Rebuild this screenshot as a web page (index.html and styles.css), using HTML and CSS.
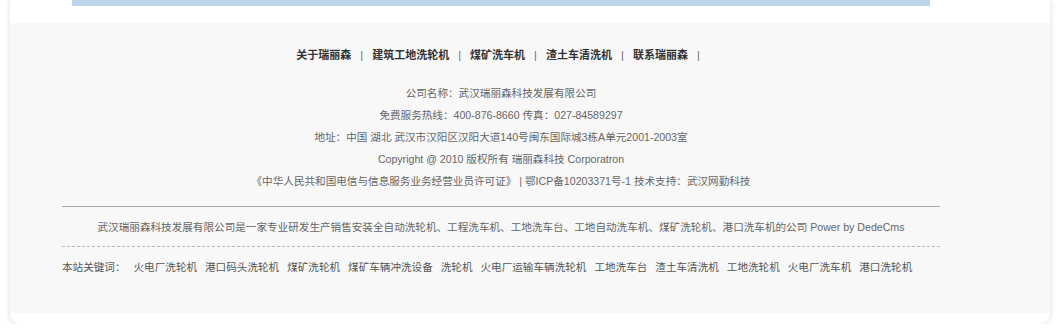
FILE: index.html
```html
<!DOCTYPE html>
<html lang="zh-CN">
<head>
  <meta charset="UTF-8">
  <title>武汉瑞丽森科技发展有限公司</title>
  <link rel="stylesheet" href="styles.css">
</head>
<body>
  <div class="page">
    <div class="top-strip">
      <div class="blue-bar"></div>
    </div>

    <!-- Footer -->
    <div class="footer">
      <div class="footer-inner">
        <div class="footer-nav">
          <a href="#">关于瑞丽森</a><span class="sep">|</span>
          <a href="#">建筑工地洗轮机</a><span class="sep">|</span>
          <a href="#">煤矿洗车机</a><span class="sep">|</span>
          <a href="#">渣土车清洗机</a><span class="sep">|</span>
          <a href="#">联系瑞丽森</a><span class="sep">|</span>
        </div>

        <div class="company-info">
          <p>公司名称：武汉瑞丽森科技发展有限公司</p>
          <p>免费服务热线：400-876-8660 传真：027-84589297</p>
          <p>地址：中国 湖北 武汉市汉阳区汉阳大道140号闽东国际城3栋A单元2001-2003室</p>
          <p>Copyright @ 2010 版权所有 瑞丽森科技 Corporatron</p>
          <p>《中华人民共和国电信与信息服务业务经营业员许可证》 | 鄂ICP备10203371号-1 技术支持：武汉网勤科技</p>
        </div>

        <div class="about-line">
          武汉瑞丽森科技发展有限公司是一家专业研发生产销售安装全自动洗轮机、工程洗车机、工地洗车台、工地自动洗车机、煤矿洗轮机、港口洗车机的公司 Power by DedeCms
        </div>

        <div class="keywords">
          <span class="kw-label">本站关键词：</span>
          <a href="#">火电厂洗轮机</a>
          <a href="#">港口码头洗轮机</a>
          <a href="#">煤矿洗轮机</a>
          <a href="#">煤矿车辆冲洗设备</a>
          <a href="#">洗轮机</a>
          <a href="#">火电厂运输车辆洗轮机</a>
          <a href="#">工地洗车台</a>
          <a href="#">渣土车清洗机</a>
          <a href="#">工地洗轮机</a>
          <a href="#">火电厂洗车机</a>
          <a href="#">港口洗轮机</a>
        </div>
      </div>
    </div>
    <div class="bottom-strip"></div>
  </div>
</body>
</html>
```

FILE: styles.css
```css
/* General Styles */
body {
  margin: 0;
  padding: 0;
  background-color: #fff;
  font-family: "Liberation Sans", "Noto Sans CJK SC", sans-serif;
  font-size: 10.6px;
  color: #555;
}

a {
  color: #555;
  text-decoration: none;
}

p {
  margin: 0;
}

.page {
  margin: 0 10px;
  background-color: #fff;
  border-radius: 0 0 10px 10px;
  box-shadow: 0 0 6px rgba(0, 0, 0, 0.14);
  overflow: hidden;
}

.top-strip {
  height: 23px;
  padding: 0 120px 0 62px;
}

.blue-bar {
  height: 6px;
  background-color: #bed4ea;
}

/* Footer */
.footer {
  background-color: #f8f8f8;
  padding: 21px 0 35px;
}

.footer-inner {
  width: 878px;
  margin-left: 52px;
}

.footer-nav {
  text-align: center;
  line-height: 22px;
  font-size: 11px;
  font-weight: bold;
}

.footer-nav a {
  color: #333;
}

.footer-nav .sep {
  color: #666;
  font-weight: normal;
  margin: 0 6px 0 9px;
}

.company-info {
  margin-top: 16px;
  text-align: center;
  line-height: 22px;
  color: #666;
  padding-bottom: 14px;
  border-bottom: 1px solid #aaa;
}

.about-line {
  text-align: center;
  line-height: 22px;
  color: #666;
  margin-top: 9px;
  padding-bottom: 8px;
  border-bottom: 1px dashed #bbb;
}

.keywords {
  line-height: 22px;
  margin-top: 9px;
  color: #555;
}

.keywords .kw-label {
  margin-right: 5px;
}

.keywords a {
  margin-right: 5px;
}

.bottom-strip {
  height: 11px;
}
```
